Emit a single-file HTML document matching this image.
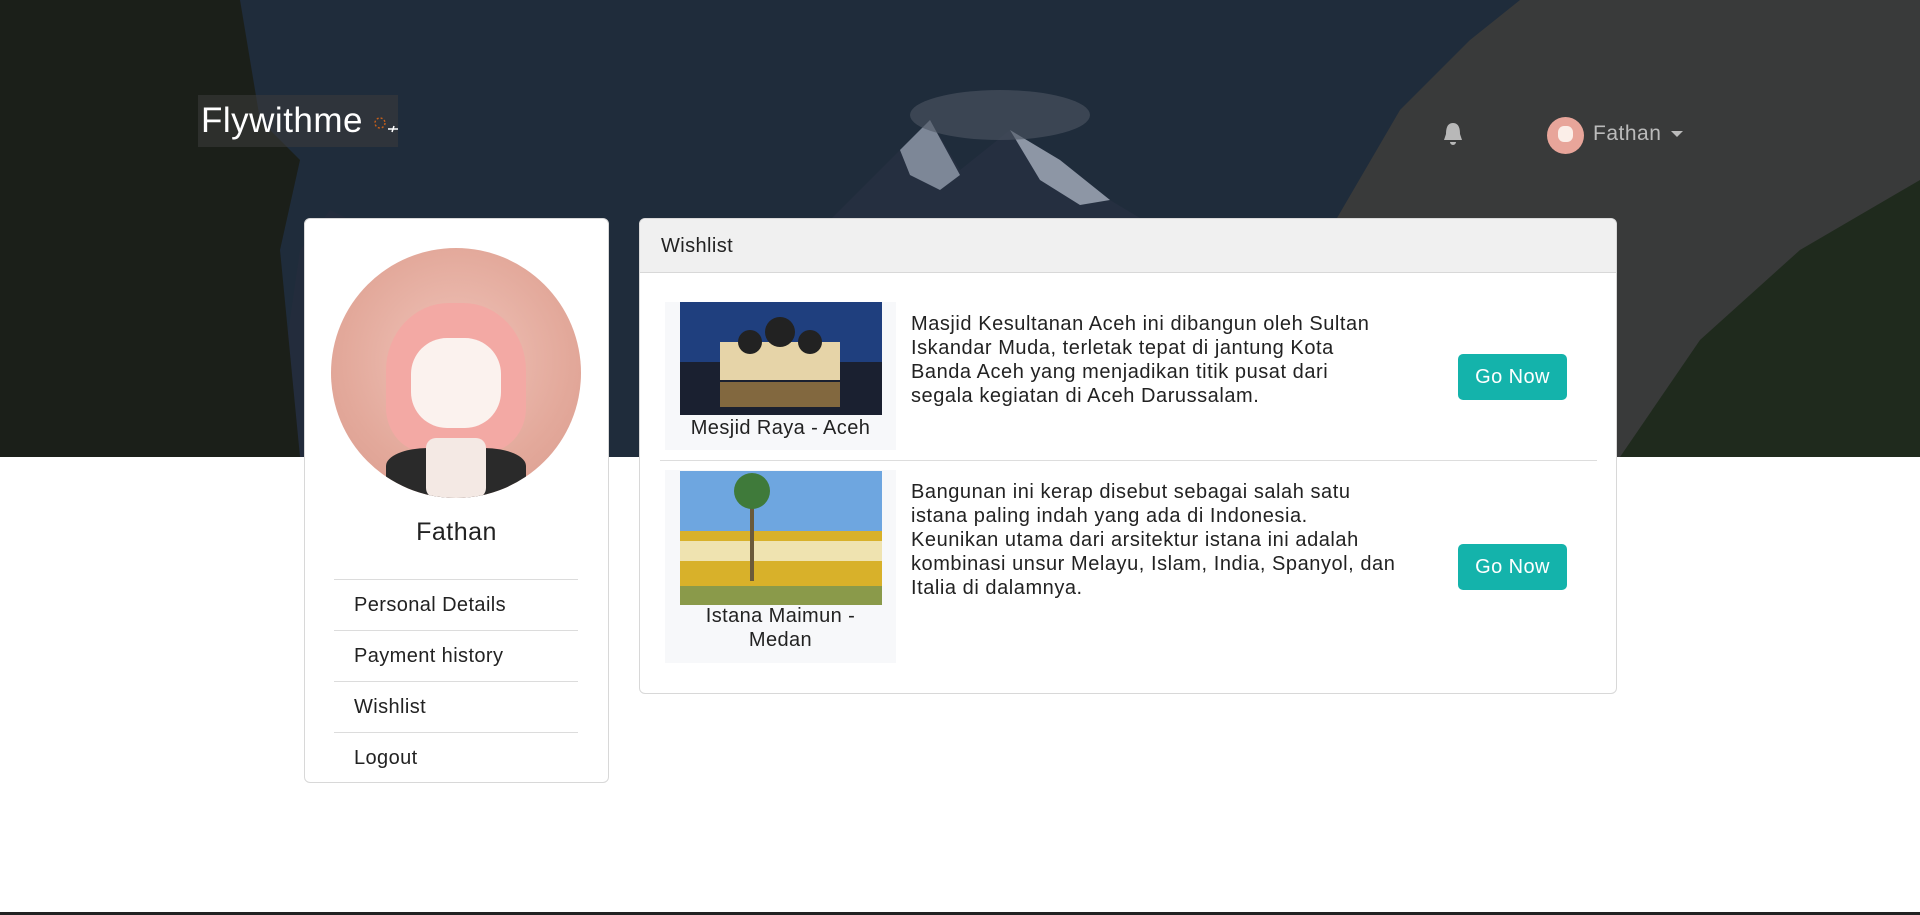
<!DOCTYPE html>
<html><head><meta charset="utf-8"><style>
*{box-sizing:border-box;margin:0;padding:0}
body{width:1920px;height:915px;background:#fff;font-family:"Liberation Sans",sans-serif;position:relative;overflow:hidden;color:#222}
.hero{position:absolute;left:0;top:0;width:1920px;height:457px;background:#1f2d3b;overflow:hidden}
.abs{position:absolute}
.card{position:absolute;background:#fff;border:1px solid #d8d8d8;border-radius:6px}
.menu{position:absolute;left:334px;width:244px;border-top:1px solid #dcdcdc;font-size:20px;padding-left:20px;color:#222;letter-spacing:.4px}
.txt{position:absolute;left:911px;width:560px;font-size:20px;line-height:24px;color:#222;letter-spacing:.55px;white-space:nowrap}
.btn{position:absolute;left:1458px;width:109px;height:46px;background:#14b3ab;color:#fff;border-radius:5px;font-size:20px;text-align:center;line-height:46px;letter-spacing:.4px}
.gbox{position:absolute;left:665px;width:231px;background:#f7f8fa}
.cap{position:absolute;font-size:20px;text-align:center;width:231px;line-height:24px;color:#222;letter-spacing:.4px}
</style></head><body>
<div class="hero">
<svg width="1920" height="457" style="position:absolute;left:0;top:0">
<rect width="1920" height="457" fill="#1f2c3b"/>
<path d="M280 457 L290 640 L300 600 L370 630 L430 690 L480 720 L560 800 L700 457Z" fill="#1c2434"/>
<path d="M270 457 L300 250 L330 210 L370 230 L410 270 L460 300 L500 330 L560 457Z" fill="#232c3c"/>
<path d="M690 457 L780 260 L820 230 L900 150 L930 120 L960 170 L1010 130 L1060 160 L1110 200 L1160 230 L1220 240 L1320 457Z" fill="#252f40"/>
<path d="M900 150 L930 120 L960 175 L940 190 L910 175Z" fill="#7d8797"/>
<path d="M1010 130 L1060 160 L1110 200 L1080 205 L1040 180Z" fill="#8d96a5"/>
<ellipse cx="1000" cy="115" rx="90" ry="25" fill="#4e5664" opacity=".6"/>
<path d="M0 0 L240 0 L260 120 L300 160 L280 250 L300 457 L0 457Z" fill="#1b1f19"/>
<path d="M1310 457 L1330 230 L1400 110 L1470 40 L1520 0 L1920 0 L1920 457Z" fill="#393a3a"/>
<path d="M1620 457 L1700 340 L1800 250 L1920 180 L1920 457Z" fill="#1f2a1d"/>
</svg>
</div>
<div class="abs" style="left:198px;top:95px;width:200px;height:52px;background:rgba(60,60,60,.55)"></div>
<div class="abs" style="left:201px;top:101px;font-size:35px;color:#fff;letter-spacing:.5px">Flywithme</div>
<svg class="abs" style="left:372px;top:115px" width="28" height="25"><circle cx="8" cy="8" r="5" fill="none" stroke="#c8601a" stroke-dasharray="2 2" stroke-width="1.4"/><path d="M16 14 l10 0 M22 11 l-2 6" stroke="#fff" stroke-width="1.5"/></svg>
<svg class="abs" style="left:1442px;top:121px" width="22" height="26"><path d="M11 2 C5 2 4 8 4 13 L2 19 L20 19 L18 13 C18 8 17 2 11 2Z M8 21 a3 3 0 0 0 6 0Z" fill="#b8b8b8"/></svg>
<div class="abs" style="left:1547px;top:117px;width:37px;height:37px;border-radius:50%;background:#e8a59a;overflow:hidden"><div style="position:absolute;left:11px;top:9px;width:15px;height:16px;background:#fbeee8;border-radius:40%"></div></div>
<div class="abs" style="left:1593px;top:122px;font-size:21px;color:#bbb;letter-spacing:.5px">Fathan</div>
<div class="abs" style="left:1671px;top:131px;border-left:6px solid transparent;border-right:6px solid transparent;border-top:6px solid #bbb"></div>

<div class="card" style="left:304px;top:218px;width:305px;height:565px"></div>
<div class="abs" style="left:331px;top:248px;width:250px;height:250px;border-radius:50%;background:radial-gradient(circle at 50% 45%,#f0c4ba 0%,#e3a99b 60%,#d99a8c 100%);overflow:hidden">
<div style="position:absolute;left:55px;top:55px;width:140px;height:150px;background:#f3a9a4;border-radius:45% 45% 30% 30%"></div>
<div style="position:absolute;left:80px;top:90px;width:90px;height:90px;background:#fbf2ee;border-radius:40%"></div>
<div style="position:absolute;left:55px;top:200px;width:140px;height:60px;background:#2a2a2a;border-radius:30% 30% 0 0"></div>
<div style="position:absolute;left:95px;top:190px;width:60px;height:60px;background:#f4e9e4;border-radius:10px"></div>
</div>
<div class="abs" style="left:304px;top:518px;width:305px;text-align:center;font-size:25px;color:#222;letter-spacing:.5px">Fathan</div>
<div class="menu" style="top:579px;height:51px;line-height:50px">Personal Details</div>
<div class="menu" style="top:630px;height:51px;line-height:50px">Payment history</div>
<div class="menu" style="top:681px;height:51px;line-height:50px">Wishlist</div>
<div class="menu" style="top:732px;height:51px;line-height:50px">Logout</div>

<div class="card" style="left:639px;top:218px;width:978px;height:476px;overflow:hidden">
<div style="height:54px;background:#f0f0f0;border-bottom:1px solid #d8d8d8;font-size:20px;line-height:54px;padding-left:21px;letter-spacing:.4px">Wishlist</div>
</div>
<div class="gbox" style="top:302px;height:148px"></div>
<svg class="abs" style="left:680px;top:302px" width="202" height="113"><rect width="202" height="113" fill="#1f3f7e"/><rect y="60" width="202" height="53" fill="#1a2030"/><rect x="40" y="40" width="120" height="38" fill="#e6d4a8"/><circle cx="70" cy="40" r="12" fill="#222"/><circle cx="100" cy="30" r="15" fill="#222"/><circle cx="130" cy="40" r="12" fill="#222"/><rect x="40" y="80" width="120" height="25" fill="#c89a4a" opacity=".6"/></svg>
<div class="cap" style="left:665px;top:416px">Mesjid Raya - Aceh</div>
<div class="txt" style="top:312px">Masjid Kesultanan Aceh ini dibangun oleh Sultan<br>Iskandar Muda, terletak tepat di jantung Kota<br>Banda Aceh yang menjadikan titik pusat dari<br>segala kegiatan di Aceh Darussalam.</div>
<div class="btn" style="top:354px">Go Now</div>
<div class="abs" style="left:660px;top:460px;width:937px;height:1px;background:#ddd"></div>
<div class="gbox" style="top:470px;height:193px"></div>
<svg class="abs" style="left:680px;top:471px" width="202" height="134"><rect width="202" height="134" fill="#6ea6e0"/><rect y="60" width="202" height="60" fill="#d8b12a"/><rect y="70" width="202" height="20" fill="#efe3b0"/><rect y="115" width="202" height="19" fill="#8a9a4a"/><rect x="70" y="20" width="4" height="90" fill="#6b5a3a"/><circle cx="72" cy="20" r="18" fill="#3f7a3a"/></svg>
<div class="cap" style="left:665px;top:604px">Istana Maimun -<br>Medan</div>
<div class="txt" style="top:480px">Bangunan ini kerap disebut sebagai salah satu<br>istana paling indah yang ada di Indonesia.<br>Keunikan utama dari arsitektur istana ini adalah<br>kombinasi unsur Melayu, Islam, India, Spanyol, dan<br>Italia di dalamnya.</div>
<div class="btn" style="top:544px">Go Now</div>
<div class="abs" style="left:0;top:912px;width:1920px;height:3px;background:#222"></div>
</body></html>
